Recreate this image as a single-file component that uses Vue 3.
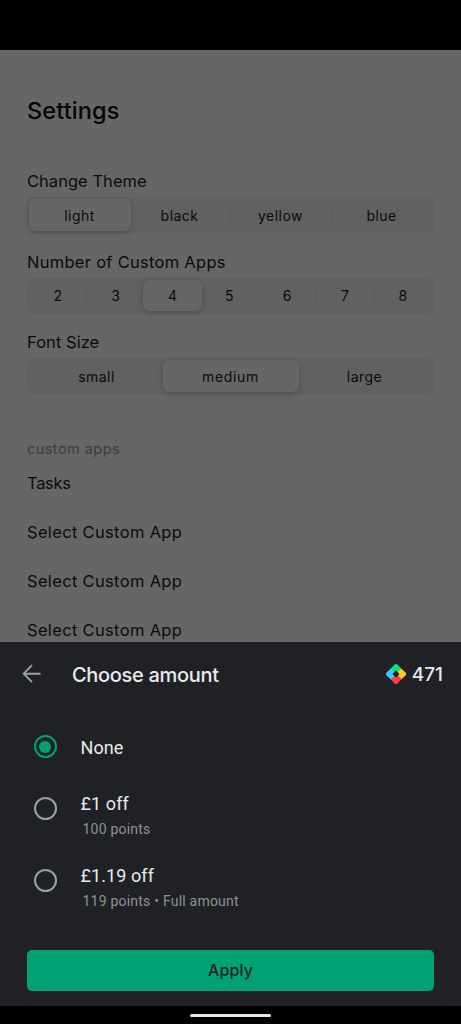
<script setup>
const groups = [
  { label: 'Change Theme', cls: 'theme', items: ['light', 'black', 'yellow', 'blue'], active: 0 },
  { label: 'Number of Custom Apps', cls: 'count', items: ['2', '3', '4', '5', '6', '7', '8'], active: 2 },
  { label: 'Font Size', cls: 'size', items: ['small', 'medium', 'large'], active: 1 },
]
const apps = ['Tasks', 'Select Custom App', 'Select Custom App', 'Select Custom App']
const options = [
  { title: 'None', cls: 'none', checked: true },
  { title: '£1 off', cls: 'one', note: '100 points' },
  { title: '£1.19 off', cls: 'full', note: '119 points • Full amount' },
]
</script>

<template>
  <div class="screen">
    <div class="status"></div>
    <main class="settings">
      <h1><span>Settings</span></h1>
      <section v-for="g in groups" :key="g.label" class="group" :class="g.cls">
        <h2><span>{{ g.label }}</span></h2>
        <div class="segments">
          <div
            v-for="(item, i) in g.items"
            :key="item"
            class="segment"
            :class="{ active: i === g.active, divided: i > 0 && i !== g.active && i !== g.active + 1 }"
          ><span>{{ item }}</span></div>
        </div>
      </section>
      <p class="caption">custom apps</p>
      <p v-for="(a, i) in apps" :key="i" class="app" :class="{ first: i === 0 }">{{ a }}</p>
    </main>
    <section class="sheet">
      <header>
        <svg class="back" width="20" height="20" viewBox="0 0 20 20">
          <path d="M18.5 9.7H2M10 1.2L1.7 9.7L10 18.2" fill="none" stroke="#9aa0a6" stroke-width="1.9" />
        </svg>
        <span class="title">Choose amount</span>
        <svg class="points" width="22" height="22" viewBox="0 0 22 22">
          <path d="M5.3 6L9.5 1.6Q11 .2 12.5 1.6L16.7 6L13.3 9.4L11 7.4L8.7 9.4Z" fill="#00e676" />
          <path d="M16.2 5.4L20.5 9.6Q21.9 11 20.5 12.4L16.2 16.6L12.6 13.1L14.5 11L12.6 8.9Z" fill="#ffca28" />
          <path d="M5.3 16L8.7 12.6L11 14.6L13.3 12.6L16.7 16L12.5 20.4Q11 21.8 9.5 20.4Z" fill="#ff3d47" />
          <path d="M5.8 5.4L9.4 8.9L7.5 11L9.4 13.1L5.8 16.6L1.5 12.4Q.1 11 1.5 9.6Z" fill="#40c4ff" />
        </svg>
        <span class="balance">471</span>
      </header>
      <div class="options">
        <div v-for="o in options" :key="o.title" class="option" :class="o.cls">
          <span class="radio" :class="{ checked: o.checked }"></span>
          <div>
            <div class="name">{{ o.title }}</div>
            <div v-if="o.note" class="note">{{ o.note }}</div>
          </div>
        </div>
      </div>
      <button><span>Apply</span></button>
    </section>
    <footer><i></i></footer>
  </div>
</template>

<style>
body { margin: 0; background: #000; }
</style>

<style scoped>
* { box-sizing: border-box; }
.screen { width: 461px; height: 1024px; overflow: hidden; display: flex; flex-direction: column; background: #000; font-family: Inter, sans-serif; }
.status { height: 50px; flex: none; }
.settings { height: 592px; flex: none; overflow: hidden; background: #666; padding: 44px 27px 0; color: #0b0b0b; }
h1 { margin: 0 0 42px; height: 34px; font-size: 23.5px; line-height: 34px; font-weight: 500; letter-spacing: .1px; color: #050505; }
.group { height: 80.5px; }
h2 { margin: 0; height: 27px; font-size: 16.5px; line-height: 22px; font-weight: 400; letter-spacing: .2px; white-space: nowrap; }
.theme h2 { letter-spacing: .03px; }
.count h2 { letter-spacing: .28px; }
.size h2 { letter-spacing: .05px; }
.segments { height: 36px; display: flex; padding: 2px 2.5px; border-radius: 8px; background: #616161; }
.segment { position: relative; flex: 1 1 0; display: flex; align-items: center; justify-content: center; font-size: 14px; letter-spacing: .45px; }
.segment.active { margin: 0 -1px; padding: 0 1px; height: 31.5px; border-radius: 7px; background: #666; box-shadow: 0 2px 6px rgba(0, 0, 0, .2); }
.theme .active, .size .active { padding-top: 1px; }
.size .active { letter-spacing: .7px; }
.divided { border-left: 1px solid transparent; border-image: linear-gradient(transparent 22%, #5b5b5b 22%, #5b5b5b 78%, transparent 78%) 1; }
.caption { margin: 26px 0 0; height: 22px; font-size: 14.5px; line-height: 22px; letter-spacing: .45px; color: #3b3c3f; }
.app { margin: 0; height: 49.3px; font-size: 16.5px; line-height: 22px; letter-spacing: .33px; }
.app.first { margin-top: 12px; letter-spacing: -.3px; }
.sheet { height: 364px; flex: none; display: flex; flex-direction: column; background: #202125; color: #e8eaed; }
header { height: 64px; display: flex; align-items: center; padding: 0 18px 0 22px; }
.title { margin-left: 30px; padding-top: 1px; font-size: 20px; line-height: 24px; font-weight: 500; letter-spacing: -.32px; }
.points { margin-left: auto; }
.balance { margin-left: 5px; padding-top: 1px; font-size: 19px; font-weight: 500; }
.options { height: 244px; padding: 23px 0 0 33.5px; font-family: Roboto, sans-serif; }
.option { display: flex; gap: 24px; height: 72px; }
.option.none { height: 56px; }
.radio { width: 23px; height: 23px; margin-top: 12px; flex: none; border: 2px solid #9aa0a6; border-radius: 50%; display: grid; place-items: center; }
.none .radio { margin-top: 6px; }
.radio.checked { border-color: #00a173; }
.radio.checked::after { content: ''; width: 12px; height: 12px; border-radius: 50%; background: #00a173; }
.name { height: 24px; margin-top: 7px; font-size: 18px; line-height: 24px; letter-spacing: .08px; }
.note { margin: 3px 0 0 2px; font-size: 14px; line-height: 20px; letter-spacing: .22px; color: #8d9196; }
button { width: 407px; height: 41px; margin: 0 27px; padding: 0; border: 0; border-radius: 5px; background: #00a173; color: #202125; font: 500 16px/41px Inter, sans-serif; letter-spacing: .1px; }
footer { height: 18px; display: flex; justify-content: center; }
footer i { width: 81px; height: 3px; margin-top: 8px; border-radius: 2px; background: #e8e4e8; }
</style>
